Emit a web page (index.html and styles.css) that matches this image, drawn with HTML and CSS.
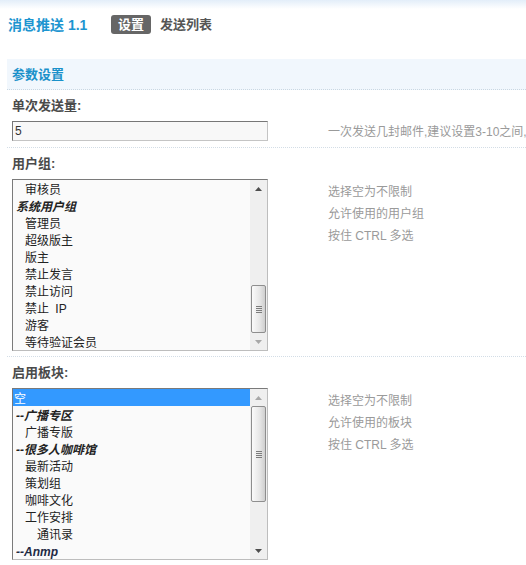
FILE: index.html
```html
<!DOCTYPE html>
<html lang="zh-CN">
<head>
<meta charset="utf-8">
<title>消息推送 1.1</title>
<link rel="stylesheet" href="styles.css">
</head>
<body>
<div class="page">
  <div class="header">
    <h1 class="title">消息推送 1.1</h1>
    <span class="tab tab-active">设置</span>
    <span class="tab">发送列表</span>
  </div>

  <div class="section">
    <div class="section-head">参数设置</div>

    <div class="field">
      <div class="field-label">单次发送量:</div>
      <div class="field-row">
        <div class="control"><input class="text-input" type="text" value="5"></div>
        <div class="hint hint-single">一次发送几封邮件,建议设置3-10之间,</div>
      </div>
    </div>

    <div class="field">
      <div class="field-label">用户组:</div>
      <div class="field-row">
        <div class="control">
          <div class="listbox">
            <div class="opts">
              <div class="opt lv1">审核员</div>
              <div class="opt group">系统用户组</div>
              <div class="opt lv1">管理员</div>
              <div class="opt lv1">超级版主</div>
              <div class="opt lv1">版主</div>
              <div class="opt lv1">禁止发言</div>
              <div class="opt lv1">禁止访问</div>
              <div class="opt lv1 spaced">禁止 IP</div>
              <div class="opt lv1">游客</div>
              <div class="opt lv1">等待验证会员</div>
            </div>
            <div class="sb">
              <div class="sb-btn"><svg width="7" height="4" viewBox="0 0 7 4"><path class="arr-on" d="M0 4L3.5 0L7 4Z"/></svg></div>
              <div class="sb-track sb-end">
                <div class="thumb thumb-short"><svg width="6" height="7" viewBox="0 0 6 7"><path class="grip" d="M0 0.5H6M0 2.5H6M0 4.5H6M0 6.5H6"/></svg></div>
              </div>
              <div class="sb-btn"><svg width="7" height="4" viewBox="0 0 7 4"><path class="arr-off" d="M0 0L3.5 4L7 0Z"/></svg></div>
            </div>
          </div>
        </div>
        <div class="hint">
          <div>选择空为不限制</div>
          <div>允许使用的用户组</div>
          <div>按住 CTRL 多选</div>
        </div>
      </div>
    </div>

    <div class="field">
      <div class="field-label">启用板块:</div>
      <div class="field-row">
        <div class="control">
          <div class="listbox">
            <div class="opts">
              <div class="opt sel">空</div>
              <div class="opt group">--广播专区</div>
              <div class="opt lv1">广播专版</div>
              <div class="opt group">--很多人咖啡馆</div>
              <div class="opt lv1">最新活动</div>
              <div class="opt lv1">策划组</div>
              <div class="opt lv1">咖啡文化</div>
              <div class="opt lv1">工作安排</div>
              <div class="opt lv2">通讯录</div>
              <div class="opt group group-latin">--Anmp</div>
            </div>
            <div class="sb">
              <div class="sb-btn"><svg width="7" height="4" viewBox="0 0 7 4"><path class="arr-off" d="M0 4L3.5 0L7 4Z"/></svg></div>
              <div class="sb-track">
                <div class="thumb thumb-long"><svg width="6" height="7" viewBox="0 0 6 7"><path class="grip" d="M0 0.5H6M0 2.5H6M0 4.5H6M0 6.5H6"/></svg></div>
              </div>
              <div class="sb-btn"><svg width="7" height="4" viewBox="0 0 7 4"><path class="arr-on" d="M0 0L3.5 4L7 0Z"/></svg></div>
            </div>
          </div>
        </div>
        <div class="hint">
          <div>选择空为不限制</div>
          <div>允许使用的板块</div>
          <div>按住 CTRL 多选</div>
        </div>
      </div>
    </div>
  </div>
</div>
</body>
</html>
```

FILE: styles.css
```css
html, body {
  margin: 0;
  padding: 0;
  overflow: hidden;
  background: #fff;
}
body {
  font-family: "Liberation Sans", "Noto Sans CJK SC", sans-serif;
  font-size: 12px;
  color: #333;
}
.page {
  width: 800px;
  background: linear-gradient(#e3eef9, #ffffff 9px);
}

/* header */
.header {
  height: 59px;
  box-sizing: border-box;
  padding: 15px 0 0 8px;
  display: flex;
  align-items: flex-start;
}
.title {
  margin: 0;
  width: 103px;
  font-size: 14px;
  line-height: 21px;
  font-weight: bold;
  color: #1d95d0;
}
.tab {
  font-size: 13px;
  font-weight: bold;
  line-height: 20px;
  height: 19px;
  color: #555;
  padding: 0 7px;
  margin-right: 2px;
}
.tab-active {
  background: #666;
  color: #fff;
  border-radius: 3px;
}

/* section */
.section {
  margin-left: 7px;
}
.section-head {
  height: 30px;
  line-height: 31px;
  padding-left: 5px;
  background: #f1f7fd;
  color: #1a91ca;
  font-size: 13px;
  font-weight: bold;
  border-bottom: 1px dotted #c9d7e2;
}
.field {
  border-bottom: 1px dotted #d3dde6;
  padding-bottom: 5px;
}
.field-label {
  height: 31px;
  line-height: 31px;
  padding-left: 5px;
  font-size: 13px;
  font-weight: bold;
  color: #4a4a4a;
}
.field-row {
  display: flex;
  align-items: flex-start;
  padding-left: 5px;
}
.control {
  width: 256px;
  flex: none;
}
.hint {
  margin-left: 60px;
  padding-top: 2px;
  color: #9a9a9a;
  line-height: 22px;
  white-space: nowrap;
}
.hint-single {
  padding-top: 1px;
  line-height: 20px;
}

/* input */
.text-input {
  display: block;
  box-sizing: border-box;
  width: 256px;
  height: 20px;
  margin: 0;
  padding: 0 2px;
  border: 1px solid;
  border-color: #777 #c4c4c4 #c4c4c4 #777;
  background: #f8f8f8;
  font-family: "Liberation Sans", "Noto Sans CJK SC", sans-serif;
  font-size: 12px;
  color: #333;
  outline: none;
}

/* listbox */
.listbox {
  box-sizing: border-box;
  width: 256px;
  height: 172px;
  border: 1px solid;
  border-color: #7a7a7a #bdbdbd #bdbdbd #7a7a7a;
  background: #fafafa;
  display: flex;
}
.opts {
  flex: 1;
  overflow: hidden;
}
.opt {
  height: 16px;
  padding-top: 1px;
  line-height: 18px;
  padding-left: 2px;
  color: #222;
  white-space: nowrap;
}
.opt.lv1 { padding-left: 12px; }
.opt.lv2 { padding-left: 24px; }
.opt.spaced { word-spacing: 3px; }
.opt.group {
  padding-left: 3px;
  font-weight: bold;
  font-style: italic;
}
.opt.group-latin { color: #1e2a44; }
.opt.sel {
  background: #3399ff;
  color: #fff;
  padding-left: 1px;
}

/* scrollbar */
.sb {
  width: 17px;
  flex: none;
  background: #efefef;
  display: flex;
  flex-direction: column;
}
.sb-btn {
  height: 17px;
  display: flex;
  align-items: center;
  justify-content: center;
}
.sb-btn svg { display: block; }
.arr-on { fill: #4d4d4d; }
.arr-off { fill: #a8a8a8; }
.sb-track {
  flex: 1;
  display: flex;
  flex-direction: column;
  justify-content: flex-start;
}
.sb-end { justify-content: flex-end; }
.thumb {
  box-sizing: border-box;
  margin: 0 1px;
  border: 1px solid #8e8e8e;
  border-radius: 2px;
  background: linear-gradient(to right, #fbfbfb, #e6e6e6 60%, #cfcfcf);
  display: flex;
  align-items: center;
  justify-content: center;
}
.thumb-short { height: 48px; }
.thumb-long { height: 96px; }
.grip { stroke: #7c7c7c; stroke-width: 1; fill: none; }
```
